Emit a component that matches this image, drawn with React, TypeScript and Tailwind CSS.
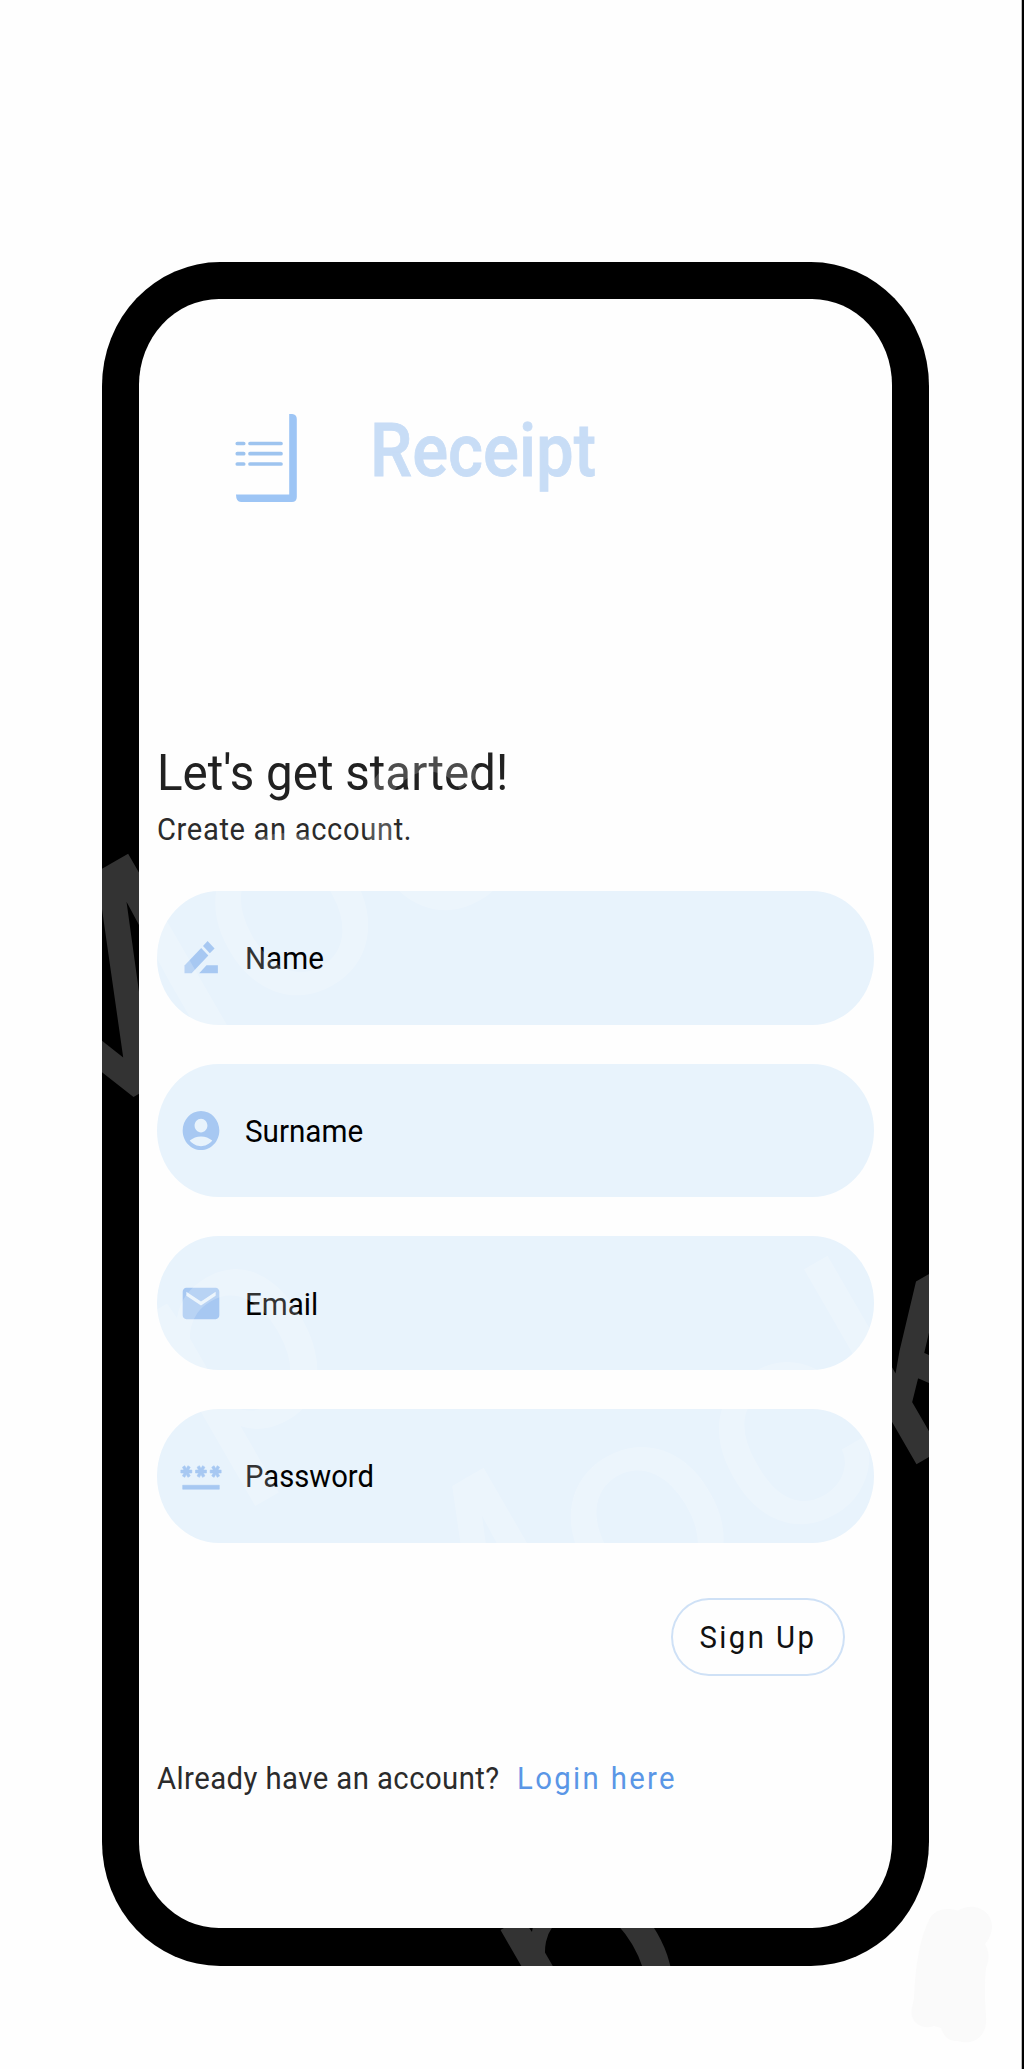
import React from "react";

type Field = { label: string; width: string; icon: React.ReactNode };

const fields: Field[] = [
  {
    label: "Name",
    width: "scale-x-[0.97]",
    icon: (
      <>
        <path d="M3 16.1V20h3.9l9.1-9.06-3.9-3.75L3 16.1z" />
        <path d="M13.1 6.13 15.6 3.6l3.8 3.75-2.6 2.5z" />
        <path d="M15 16l-4 4h10.2v-4z" />
      </>
    ),
  },
  {
    label: "Surname",
    width: "scale-x-[0.972]",
    icon: (
      <path d="M12 2C6.48 2 2 6.48 2 12s4.48 10 10 10 10-4.48 10-10S17.52 2 12 2zm0 4c1.93 0 3.5 1.57 3.5 3.5S13.93 13 12 13s-3.5-1.57-3.5-3.5S10.07 6 12 6zm0 14c-2.03 0-4.43-.82-6.14-2.88C7.55 15.8 9.68 15 12 15s4.45.8 6.14 2.12C16.43 19.18 14.03 20 12 20z" />
    ),
  },
  {
    label: "Email",
    width: "scale-x-[0.97]",
    icon: (
      <path d="M20 4H4c-1.1 0-1.99.9-1.99 2L2 18c0 1.1.9 2 2 2h16c1.1 0 2-.9 2-2V6c0-1.1-.9-2-2-2zm0 4l-8 5-8-5V6l8 5 8-5v2z" />
    ),
  },
  {
    label: "Password",
    width: "scale-x-[0.957]",
    icon: (
      <path
        stroke="#a7c8f2"
        strokeWidth="0.3"
        d="M2 17h20v2H2v-2zm1.15-4.05L4 11.47l.85 1.48 1.3-.75L5.3 10.72H7v-1.5H5.3l.85-1.47L4.85 7 4 8.47 3.15 7l-1.3.75.85 1.47H1v1.5h1.7l-.85 1.48 1.3.75zm6.7-.75l1.3.75.85-1.48.85 1.48 1.3-.75-.85-1.48H15v-1.5h-1.7l.85-1.47-1.3-.75L12 8.47 11.15 7l-1.3.75.85 1.47H9v1.5h1.7l-.85 1.48zM23 9.22h-1.7l.85-1.47-1.3-.75L20 8.47 19.15 7l-1.3.75.85 1.47H17v1.5h1.7l-.85 1.48 1.3.75.85-1.48.85 1.48 1.3-.75-.85-1.48H23v-1.5z"
      />
    ),
  },
];

function Logo() {
  return (
    <svg className="ml-[96px] h-[88px] w-[62px] shrink-0" viewBox="0 0 62 88">
      <path
        fill="#9dc5f5"
        d="M54.2 0h3q4.6.4 4.6 5v78q0 5-5 5H6q-5-.4-5-7.6h53.2z"
      />
      <g stroke="#9ec4ef" strokeWidth="3.7" strokeLinecap="round">
        <path d="M2.3 29.5h6.4M15 29.5h31M2.3 39.7h6.4M15 39.7h31M2.3 50h6.4M15 50h31" />
      </g>
    </svg>
  );
}

function Watermark() {
  return (
    <svg
      className="pointer-events-none absolute inset-0 h-full w-full"
      viewBox="102 262 827 1704"
      fill="#fff"
      fillOpacity="0.2"
      fontFamily="Roboto, sans-serif"
      fontSize="300"
      aria-hidden="true"
    >
      <text transform="translate(29.5 1157) rotate(-30)" letterSpacing="1">
        Mock
      </text>
      <text transform="translate(207 1463.5) rotate(-30)">p</text>
      <text transform="translate(385 1771) rotate(-30)" letterSpacing="1">
        Mock
      </text>
      <text transform="translate(562 2077.5) rotate(-30)">p</text>
    </svg>
  );
}

export default function App() {
  return (
    <div className="relative flex h-[2069px] w-[1024px] overflow-hidden bg-[#fefefe] font-[Roboto,sans-serif] antialiased">
      <main className="relative mt-[262px] ml-[102px] h-[1704px] w-[827px] overflow-hidden rounded-[118px/124px] bg-black px-[37px] pt-[37px] pb-[38px]">
        <div className="flex h-full flex-col rounded-[80px/86px] bg-[#fefefe] px-[18px] pt-[115px]">
          <header className="-ml-[18px] flex h-[88px]">
            <Logo />
            <h1 className="ml-[73px] origin-left scale-x-[0.9] text-[74.5px] leading-none font-medium whitespace-nowrap text-[#c8ddf6] [-webkit-text-stroke:0.8px_#c8ddf6]">
              Receipt
            </h1>
          </header>

          <h2 className="mt-[246px] origin-left scale-x-[0.95] text-[50px] leading-[50px] whitespace-nowrap text-[#212121]">
            Let's get started!
          </h2>
          <p className="mt-[16px] origin-left scale-x-[0.955] text-[30.5px] leading-[31px] tracking-[0.68px] whitespace-nowrap text-[#2b2b2b]">
            Create an account.
          </p>

          <form className="mt-[46px] flex flex-col gap-[38.8px]">
            {fields.map((f) => (
              <label
                key={f.label}
                className="flex h-[133.8px] w-[717px] items-center rounded-[62px/67px] bg-[#e8f3fc] pl-[22px]"
              >
                <svg
                  className="h-[47px] w-[44px]"
                  viewBox="0 0 24 24"
                  preserveAspectRatio="none"
                  fill="#a7c8f2"
                >
                  {f.icon}
                </svg>
                <span
                  className={`mt-[2px] ml-[22px] origin-left text-[30.5px] leading-[31px] text-black ${f.width}`}
                >
                  {f.label}
                </span>
              </label>
            ))}
          </form>

          <button className="mt-[55.4px] mr-[29.5px] flex h-[78.5px] w-[173.500px] shrink-0 items-center justify-center self-end rounded-[38px/39px] border-2 border-[#cfe1f6]">
            <span className="scale-x-[0.945] pl-[1px] text-[31px] leading-[31px] tracking-[2.6px] whitespace-nowrap text-[#111]">
              Sign Up
            </span>
          </button>

          <div className="mt-[86.7px] flex">
            <p className="w-[360px] origin-left scale-x-[0.945] text-[31px] leading-[31px] tracking-[0.46px] whitespace-nowrap text-[#2b2b2b]">
              Already have an account?
            </p>
            <a className="origin-left scale-x-[0.945] text-[31px] leading-[31px] tracking-[2.5px] whitespace-nowrap text-[#5a96e6]">
              Login here
            </a>
          </div>
        </div>
        <Watermark />
      </main>

      <svg
        className="absolute top-[1904px] left-[908px] h-[142px] w-[88px]"
        viewBox="908 1904 88 142"
        aria-hidden="true"
      >
        <path
          fill="#fafafa"
          d="M958 1910.500C974 1901 992 1911 992 1926C992 1935 988 1940 985 1944C990 1953 989 1961 986 1968C984 1990 985 2000 986 2015C988 2036 975 2044 962 2042C957 2040 946 2044 941 2028L934 2026C924 2030 910 2024 911.500 2010L914 1998C915 1970 919 1940 929 1920C934 1909 946 1907 958 1910.500Z"
        />
      </svg>

      <div className="ml-auto h-full w-[3px] border-l border-[#bdbdbd] bg-black" />
    </div>
  );
}
